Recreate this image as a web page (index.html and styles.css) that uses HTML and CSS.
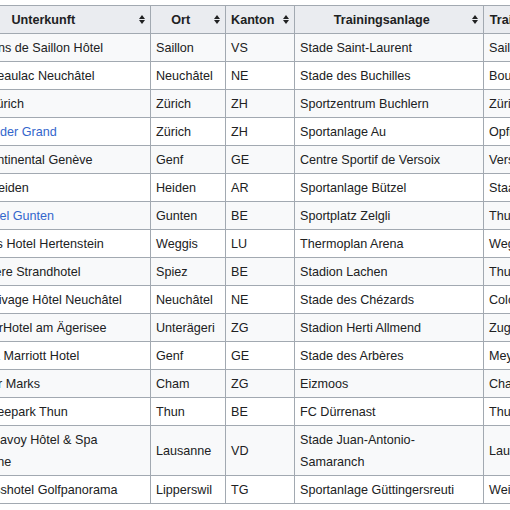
FILE: index.html
```html
<!DOCTYPE html>
<html lang="de">
<head>
<meta charset="utf-8">
<title>Teamquartiere</title>
<link rel="stylesheet" href="styles.css">
</head>
<body>
<div class="viewport">
<table class="wikitable">
<colgroup>
<col class="c-unterkunft"><col class="c-ort"><col class="c-kanton"><col class="c-anlage"><col class="c-trainingsort">
</colgroup>
<thead>
<tr>
<th><div class="th-inner"><span class="label">Unterkunft</span><svg class="sort" viewBox="0 0 6 9" width="6" height="9"><path d="M0 4L3 0L6 4Z M0 5L3 9L6 5Z"/></svg></div></th>
<th><div class="th-inner"><span class="label">Ort</span><svg class="sort" viewBox="0 0 6 9" width="6" height="9"><path d="M0 4L3 0L6 4Z M0 5L3 9L6 5Z"/></svg></div></th>
<th><div class="th-inner"><span class="label">Kanton</span><svg class="sort" viewBox="0 0 6 9" width="6" height="9"><path d="M0 4L3 0L6 4Z M0 5L3 9L6 5Z"/></svg></div></th>
<th><div class="th-inner"><span class="label">Trainingsanlage</span><svg class="sort" viewBox="0 0 6 9" width="6" height="9"><path d="M0 4L3 0L6 4Z M0 5L3 9L6 5Z"/></svg></div></th>
<th><div class="th-inner"><span class="label">Trainingsort</span><svg class="sort" viewBox="0 0 6 9" width="6" height="9"><path d="M0 4L3 0L6 4Z M0 5L3 9L6 5Z"/></svg></div></th>
</tr>
</thead>
<tbody>
<tr><td>Les Bains de Saillon Hôtel</td><td>Saillon</td><td>VS</td><td>Stade Saint-Laurent</td><td>Saillon</td></tr>
<tr><td>Hotel Beaulac Neuchâtel</td><td>Neuchâtel</td><td>NE</td><td>Stade des Buchilles</td><td>Boudry</td></tr>
<tr><td>Hotel Zürich</td><td>Zürich</td><td>ZH</td><td>Sportzentrum Buchlern</td><td>Zürich</td></tr>
<tr><td><a href="#">The Dolder Grand</a></td><td>Zürich</td><td>ZH</td><td>Sportanlage Au</td><td>Opfikon</td></tr>
<tr><td>InterContinental Genève</td><td>Genf</td><td>GE</td><td>Centre Sportif de Versoix</td><td>Versoix</td></tr>
<tr><td>Hotel Heiden</td><td>Heiden</td><td>AR</td><td>Sportanlage Bützel</td><td>Staad</td></tr>
<tr><td><a href="#">Parkhotel Gunten</a></td><td>Gunten</td><td>BE</td><td>Sportplatz Zelgli</td><td>Thun</td></tr>
<tr><td>Campus Hotel Hertenstein</td><td>Weggis</td><td>LU</td><td>Thermoplan Arena</td><td>Weggis</td></tr>
<tr><td>Belvédère Strandhotel</td><td>Spiez</td><td>BE</td><td>Stadion Lachen</td><td>Thun</td></tr>
<tr><td>Beau-Rivage Hôtel Neuchâtel</td><td>Neuchâtel</td><td>NE</td><td>Stade des Chézards</td><td>Colombier</td></tr>
<tr><td>SeminarHotel am Ägerisee</td><td>Unterägeri</td><td>ZG</td><td>Stadion Herti Allmend</td><td>Zug</td></tr>
<tr><td>Geneva Marriott Hotel</td><td>Genf</td><td>GE</td><td>Stade des Arbères</td><td>Meyrin</td></tr>
<tr><td>Hotel Ur Marks</td><td>Cham</td><td>ZG</td><td>Eizmoos</td><td>Cham</td></tr>
<tr><td>Hotel Seepark Thun</td><td>Thun</td><td>BE</td><td>FC Dürrenast</td><td>Thun</td></tr>
<tr><td>Royal Savoy Hôtel &amp; Spa Lausanne</td><td>Lausanne</td><td>VD</td><td>Stade Juan-Antonio-Samaranch</td><td>Lausanne</td></tr>
<tr><td>Wellnesshotel Golfpanorama</td><td>Lipperswil</td><td>TG</td><td>Sportanlage Güttingersreuti</td><td>Weinfelden</td></tr>
</tbody>
</table>
</div>
</body>
</html>
```

FILE: styles.css
```css
html, body {
  margin: 0;
  padding: 0;
  background: #ffffff;
  overflow: hidden;
}

body {
  font-family: "Liberation Sans", Arial, sans-serif;
  font-size: 12.6px;
  line-height: 22px;
  color: #202122;
}

.viewport {
  width: 510px;
  height: 510px;
  overflow: hidden;
}

.wikitable {
  margin: 5px 0 0 -50px;
  border-collapse: collapse;
  table-layout: fixed;
  width: 633px;
  border: 1px solid #a2a9b1;
  background: #ffffff;
}

.c-unterkunft { width: 200px; }
.c-ort { width: 75px; }
.c-kanton { width: 69px; }
.c-anlage { width: 189px; }
.c-trainingsort { width: 100px; }

.wikitable th,
.wikitable td {
  border: 1px solid #a2a9b1;
  padding: 2.5px 5px;
  vertical-align: middle;
}

.wikitable th {
  background: #eaecf0;
  font-weight: bold;
  text-align: center;
  padding-right: 5.5px;
  white-space: nowrap;
}

.wikitable td {
  text-align: left;
}

.wikitable tbody tr:nth-child(odd) td {
  background: #f8f9fa;
}

.th-inner {
  display: flex;
  align-items: center;
}

.th-inner .label {
  flex: 1 1 auto;
  min-width: 0;
  text-align: center;
  white-space: nowrap;
}

.sort {
  flex: 0 0 6px;
  margin-left: 8px;
  fill: #202122;
}

.wikitable a {
  color: #3366cc;
  text-decoration: none;
}
```
